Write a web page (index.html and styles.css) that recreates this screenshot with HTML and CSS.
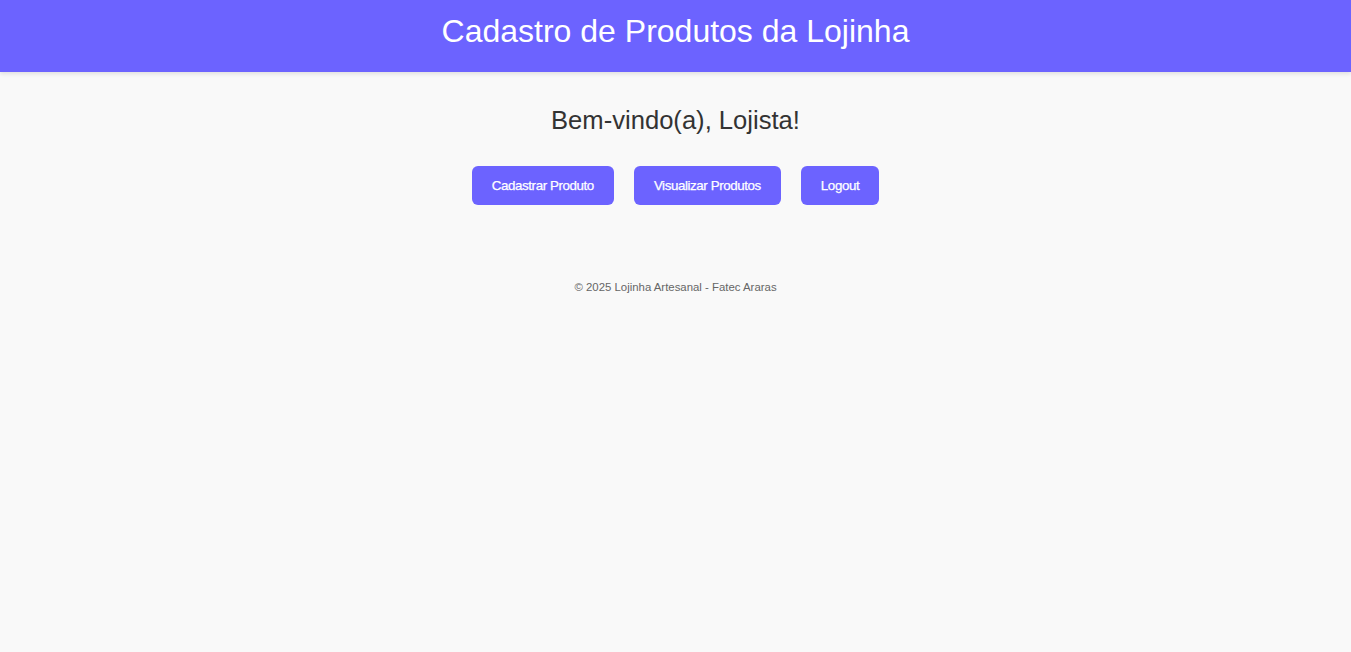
FILE: index.html
```html
<!DOCTYPE html>
<html lang="pt-BR">
<head>
<meta charset="utf-8">
<title>Cadastro de Produtos da Lojinha</title>
<link rel="stylesheet" href="styles.css">
</head>
<body>
<header class="topbar">
  <h1 class="topbar-title">Cadastro de Produtos da Lojinha</h1>
</header>
<main class="content">
  <h2 class="welcome">Bem-vindo(a), Lojista!</h2>
  <nav class="actions">
    <button class="btn" type="button">Cadastrar Produto</button>
    <button class="btn" type="button">Visualizar Produtos</button>
    <button class="btn" type="button">Logout</button>
  </nav>
</main>
<footer class="footer">
  <p class="footer-text">© 2025 Lojinha Artesanal - Fatec Araras</p>
</footer>
</body>
</html>
```
FILE: styles.css
```css
html, body {
  margin: 0;
  padding: 0;
}
body {
  background: #f9f9f9;
  font-family: "Liberation Sans", Arial, sans-serif;
  color: #333;
  min-height: 652px;
}
.topbar {
  background: #6c63ff;
  color: #fff;
  text-align: center;
  padding: 13px 0 22px;
  box-shadow: 0 2px 4px rgba(0, 0, 0, 0.1);
}
.topbar-title {
  margin: 0;
  font-size: 32px;
  font-weight: normal;
  line-height: 37px;
}
.content {
  display: flex;
  flex-direction: column;
  align-items: center;
  padding-top: 33px;
}
.welcome {
  margin: 0;
  font-size: 25.6px;
  font-weight: normal;
  line-height: 30px;
  color: #333;
}
.actions {
  display: flex;
  justify-content: center;
  gap: 20px;
  margin-top: 31px;
}
.btn {
  background: #6c63ff;
  color: #fff;
  border: none;
  border-radius: 6px;
  padding: 12px 20px;
  font-family: "Liberation Sans", Arial, sans-serif;
  font-size: 13.333px;
  letter-spacing: -0.4px;
  line-height: 15px;
  -webkit-text-stroke: 0.25px #fff;
  cursor: pointer;
}
.footer {
  text-align: center;
  padding-top: 75px;
}
.footer-text {
  margin: 0;
  font-size: 11.4px;
  line-height: 14px;
  color: #666;
}
```
